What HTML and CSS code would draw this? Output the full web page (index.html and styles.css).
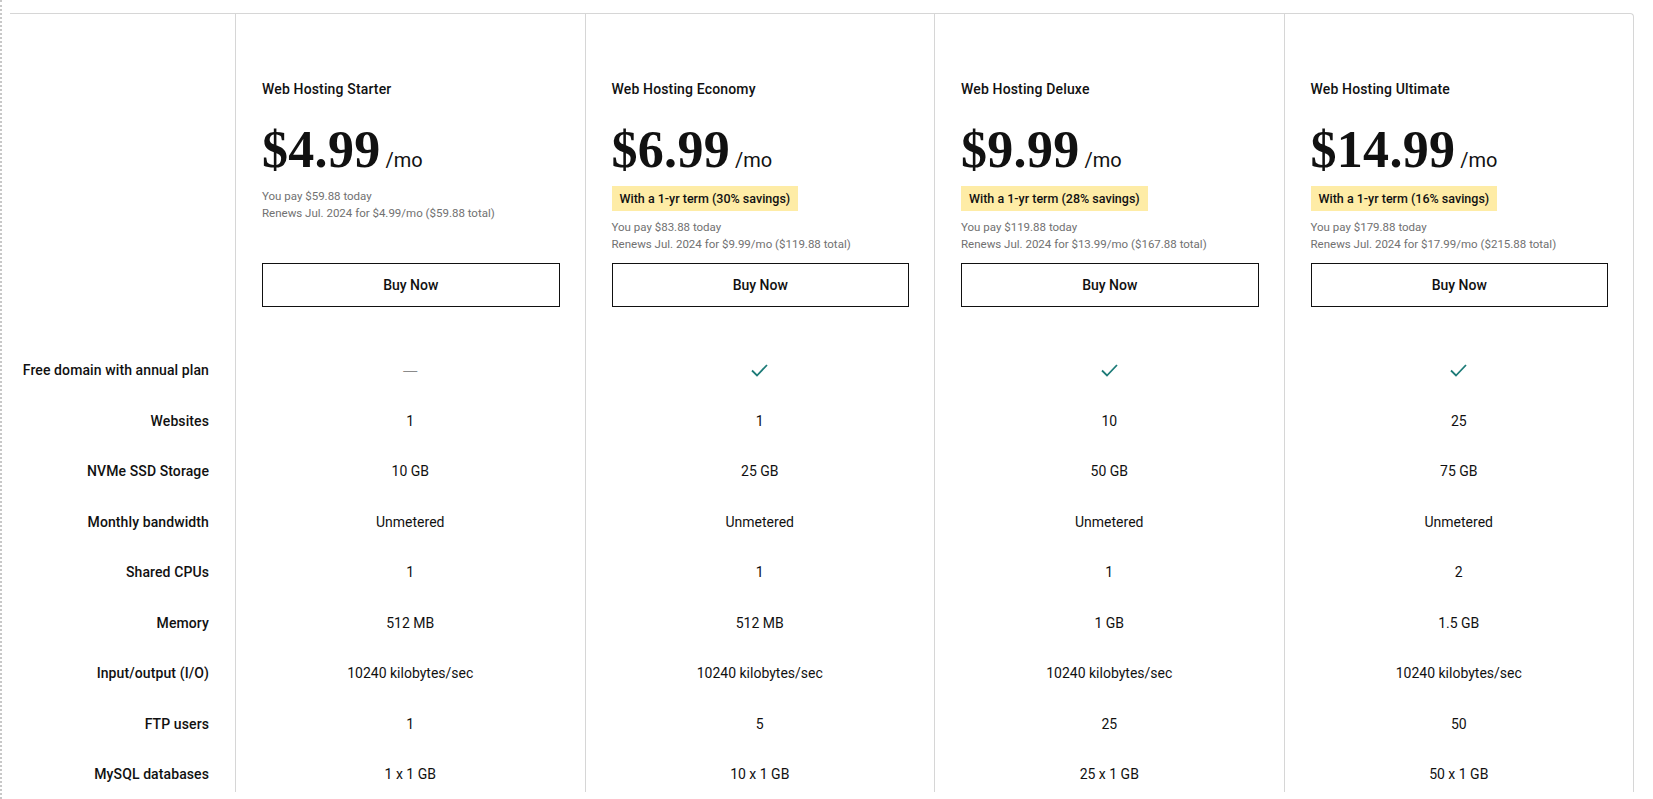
FILE: index.html
```html
<!DOCTYPE html>
<html lang="en">
<head>
<meta charset="utf-8">
<title>Web Hosting Plans</title>
<link rel="stylesheet" href="styles.css">
</head>
<body>
<div class="page">
  <div class="table">
    <div class="cell label-head"></div>

    <div class="cell plan head">
      <div class="name">Web Hosting Starter</div>
      <div class="price"><span class="amount">$4.99</span><span class="per">/mo</span></div>
      <div class="info">
        <div class="sub">You pay $59.88 today<br>Renews Jul. 2024 for $4.99/mo ($59.88 total)</div>
      </div>
      <button class="btn">Buy Now</button>
    </div>

    <div class="cell plan head">
      <div class="name">Web Hosting Economy</div>
      <div class="price"><span class="amount">$6.99</span><span class="per">/mo</span></div>
      <div class="info">
        <div class="badge">With a 1-yr term (30% savings)</div>
        <div class="sub">You pay $83.88 today<br>Renews Jul. 2024 for $9.99/mo ($119.88 total)</div>
      </div>
      <button class="btn">Buy Now</button>
    </div>

    <div class="cell plan head">
      <div class="name">Web Hosting Deluxe</div>
      <div class="price"><span class="amount">$9.99</span><span class="per">/mo</span></div>
      <div class="info">
        <div class="badge">With a 1-yr term (28% savings)</div>
        <div class="sub">You pay $119.88 today<br>Renews Jul. 2024 for $13.99/mo ($167.88 total)</div>
      </div>
      <button class="btn">Buy Now</button>
    </div>

    <div class="cell plan head">
      <div class="name">Web Hosting Ultimate</div>
      <div class="price"><span class="amount">$14.99</span><span class="per">/mo</span></div>
      <div class="info">
        <div class="badge">With a 1-yr term (16% savings)</div>
        <div class="sub">You pay $179.88 today<br>Renews Jul. 2024 for $17.99/mo ($215.88 total)</div>
      </div>
      <button class="btn">Buy Now</button>
    </div>

    <div class="cell label">Free domain with annual plan</div>
    <div class="cell plan val"><span class="dash">—</span></div>
    <div class="cell plan val"><svg class="check" width="17" height="13" viewBox="0 0 17 13"><polyline points="1,6.5 6,11.5 16,1" fill="none" stroke="#1d7b78" stroke-width="1.8"/></svg></div>
    <div class="cell plan val"><svg class="check" width="17" height="13" viewBox="0 0 17 13"><polyline points="1,6.5 6,11.5 16,1" fill="none" stroke="#1d7b78" stroke-width="1.8"/></svg></div>
    <div class="cell plan val"><svg class="check" width="17" height="13" viewBox="0 0 17 13"><polyline points="1,6.5 6,11.5 16,1" fill="none" stroke="#1d7b78" stroke-width="1.8"/></svg></div>

    <div class="cell label">Websites</div>
    <div class="cell plan val">1</div>
    <div class="cell plan val">1</div>
    <div class="cell plan val">10</div>
    <div class="cell plan val">25</div>

    <div class="cell label">NVMe SSD Storage</div>
    <div class="cell plan val">10 GB</div>
    <div class="cell plan val">25 GB</div>
    <div class="cell plan val">50 GB</div>
    <div class="cell plan val">75 GB</div>

    <div class="cell label">Monthly bandwidth</div>
    <div class="cell plan val">Unmetered</div>
    <div class="cell plan val">Unmetered</div>
    <div class="cell plan val">Unmetered</div>
    <div class="cell plan val">Unmetered</div>

    <div class="cell label">Shared CPUs</div>
    <div class="cell plan val">1</div>
    <div class="cell plan val">1</div>
    <div class="cell plan val">1</div>
    <div class="cell plan val">2</div>

    <div class="cell label">Memory</div>
    <div class="cell plan val">512 MB</div>
    <div class="cell plan val">512 MB</div>
    <div class="cell plan val">1 GB</div>
    <div class="cell plan val">1.5 GB</div>

    <div class="cell label">Input/output (I/O)</div>
    <div class="cell plan val">10240 kilobytes/sec</div>
    <div class="cell plan val">10240 kilobytes/sec</div>
    <div class="cell plan val">10240 kilobytes/sec</div>
    <div class="cell plan val">10240 kilobytes/sec</div>

    <div class="cell label">FTP users</div>
    <div class="cell plan val">1</div>
    <div class="cell plan val">5</div>
    <div class="cell plan val">25</div>
    <div class="cell plan val">50</div>

    <div class="cell label">MySQL databases</div>
    <div class="cell plan val">1 x 1 GB</div>
    <div class="cell plan val">10 x 1 GB</div>
    <div class="cell plan val">25 x 1 GB</div>
    <div class="cell plan val">50 x 1 GB</div>
  </div>
</div>
</body>
</html>
```

FILE: styles.css
```css
* { box-sizing: border-box; }

html, body {
  margin: 0;
  padding: 0;
  background: #ffffff;
}

body {
  font-family: Roboto, "Liberation Sans", Arial, sans-serif;
  color: #111111;
  overflow: hidden;
}

.page {
  height: 799px;
  border-left: 2px dotted #c8c8c8;
  padding: 13px 19px 0 8px;
}

.table {
  display: grid;
  grid-template-columns: 225px repeat(4, 1fr);
  grid-template-rows: 331px repeat(9, 50.5px);
  height: 779px;
  overflow: hidden;
  border-top: 1px solid #d6d6d6;
  border-right: 1px solid #d6d6d6;
  border-top-right-radius: 4px;
}

.cell.plan {
  border-left: 1px solid #d6d6d6;
}

.head {
  display: flex;
  flex-direction: column;
  align-items: flex-start;
  padding: 0 25px 38px 26px;
}

.name {
  margin-top: 65px;
  font-size: 14px;
  line-height: 20px;
  font-weight: 500;
  letter-spacing: 0.15px;
}

.price {
  margin-top: 23px;
  font-family: "Liberation Serif", "Times New Roman", serif;
  font-size: 52px;
  line-height: 56px;
  height: 56px;
  white-space: nowrap;
}

.amount {
  font-weight: 700;
  letter-spacing: 0.3px;
}

.per {
  font-family: Roboto, "Liberation Sans", Arial, sans-serif;
  font-size: 20px;
  line-height: 1;
  font-weight: 400;
  margin-left: 5px;
}

.info {
  display: flex;
  flex-direction: column;
  align-items: flex-start;
  margin-bottom: 10px;
}

.badge {
  margin-top: 8px;
  background: #feeca6;
  padding: 4px 8px;
  font-size: 12.5px;
  line-height: 17px;
  font-weight: 500;
  color: #111111;
}

.sub {
  margin-top: 10px;
  font-size: 11.5px;
  line-height: 17px;
  color: #717171;
}

.badge + .sub {
  margin-top: 8px;
}

.btn {
  margin-top: auto;
  width: 100%;
  height: 44px;
  border: 1.5px solid #111111;
  border-radius: 0;
  background: #ffffff;
  color: #111111;
  font-family: Roboto, "Liberation Sans", Arial, sans-serif;
  font-size: 14px;
  font-weight: 500;
  cursor: pointer;
}

.label {
  display: flex;
  align-items: center;
  justify-content: flex-end;
  padding-right: 26px;
  font-size: 14px;
  line-height: 20px;
  font-weight: 500;
  text-align: right;
  white-space: nowrap;
  letter-spacing: 0.1px;
}

.val {
  display: flex;
  align-items: center;
  justify-content: center;
  font-size: 14px;
  line-height: 20px;
  font-weight: 400;
  white-space: nowrap;
}

.dash {
  color: #8a8a8a;
  font-family: "Liberation Sans", Arial, sans-serif;
  font-size: 14px;
}

.check {
  display: block;
}
```
